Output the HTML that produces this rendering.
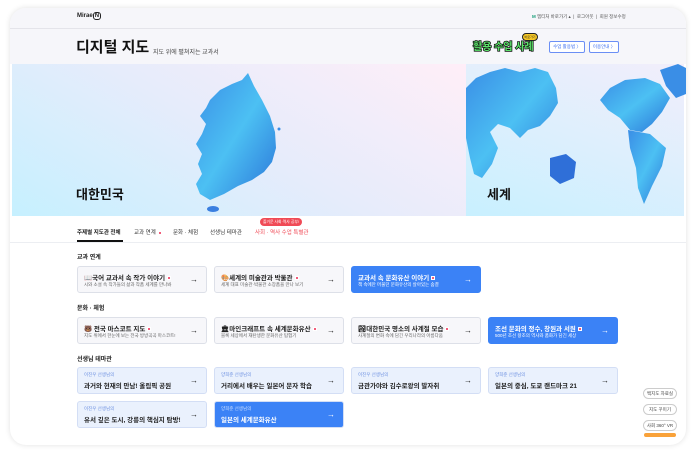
<!DOCTYPE html>
<html><head><meta charset="utf-8"><style>
*{margin:0;padding:0;box-sizing:border-box}
body{width:696px;height:452px;background:#fff;font-family:"Liberation Sans","Noto Sans CJK KR",sans-serif;position:relative;overflow:hidden;color:#222}
.frame{position:absolute;left:10px;top:8px;width:676px;height:437px;border-radius:16px;background:#fff;box-shadow:0 0 6px rgba(0,0,0,.12);overflow:hidden}
.hdr{position:absolute;left:0;top:0;width:676px;height:56px;background:#f6f6fa}
.a{position:absolute;white-space:nowrap}
.card{position:absolute;width:130px;height:27px;border:1px solid #dde0e8;border-radius:3px;background:#f7f7fa}
.card .t{position:absolute;left:6px;top:5px;font-size:6.5px;font-weight:bold;color:#222}
.card .s{position:absolute;left:6px;top:15px;font-size:4.5px;color:#666}
.card .ar{position:absolute;right:8px;top:8px;font-size:8px;font-weight:bold;color:#222}
.card.b{background:#3b82f6;border-color:#3b82f6}
.card.b .t,.card.b .s,.card.b .ar{color:#fff}
.card.l{background:#eaf1fd;border-color:#d3def5}
.card.l .t{top:4px;font-size:4.5px;font-weight:normal;color:#6b8fe0}
.card.l .s{top:12px;font-size:6.5px;font-weight:bold;color:#222}
.card.l.b{background:#3b82f6}.card.l.b .t{color:#cfe0ff}.card.l.b .s{color:#fff}
.n{display:inline-block;width:4px;height:4px;background:#f25c7a;border:0.5px solid #fff;margin-left:2px;vertical-align:middle}
.lab{position:absolute;left:67px;font-size:6px;font-weight:bold}
.fb{position:absolute;left:633px;width:34px;height:11px;border:1px solid #ccc;border-radius:6px;background:#fff;font-size:4.5px;text-align:center;line-height:9px;color:#444}
</style></head><body>
<div class="frame">
<div class="hdr"></div>
<div class="a" style="left:67px;top:5px;font-size:6px;font-weight:bold">Mirae<span style="border:1px solid #222;border-radius:3px;padding:0 1px">N</span></div>
<div class="a" style="left:522px;top:6px;font-size:4.5px;color:#555"><b style="color:#1a9e7a">M</b> 엠티처 바로가기 ▴ &nbsp;|&nbsp; 로그아웃 &nbsp;|&nbsp; 회원 정보수정</div>
<div style="position:absolute;left:0;top:20px;width:676px;height:1px;background:#e4e4ea"></div>
<div class="a" style="left:66px;top:28px;font-size:15px;font-weight:bold;color:#111">디지털 지도</div>
<div class="a" style="left:143px;top:39px;font-size:6px;color:#444">지도 위에 펼쳐지는 교과서</div>
<div class="a" style="left:463px;top:30px;font-size:10px;font-weight:bold;color:#5be36a;-webkit-text-stroke:1.5px #111;paint-order:stroke">활용 수업 사례</div>
<div class="a" style="left:512px;top:25px;width:16px;height:8px;border-radius:4px;background:#f7c825;border:1px solid #222;font-size:3px;text-align:center;line-height:6px">바로가기</div>
<div class="a" style="left:539px;top:33px;width:36px;height:12px;border:1px solid #6b8ff5;border-radius:2px;background:#fff;font-size:4.5px;color:#3b6ef0;text-align:center;line-height:10px">수업 활용법 〉</div>
<div class="a" style="left:579px;top:33px;width:30px;height:12px;border:1px solid #6b8ff5;border-radius:2px;background:#fff;font-size:4.5px;color:#3b6ef0;text-align:center;line-height:10px">이용안내 〉</div>
<div style="position:absolute;left:2px;top:56px;width:454px;height:152px;background:linear-gradient(30deg,#c6f0ff 0%,#e6ecfb 50%,#ffeef8 100%)"></div>
<div style="position:absolute;left:456px;top:56px;width:218px;height:152px;background:linear-gradient(20deg,#c8f0ff,#f2eefb)"></div>
<svg style="position:absolute;left:0;top:0" width="676" height="437">
<defs><linearGradient id="g" x1="0" y1="0" x2="1" y2="1"><stop offset="0" stop-color="#3a8ee6"/><stop offset=".5" stop-color="#4cc0f3"/><stop offset="1" stop-color="#2a74d8"/></linearGradient></defs>
<path d="M238 65 L244 78 L252 92 L260 108 L265 124 L266 140 L262 154 L254 164 L242 172 L228 178 L214 186 L200 192 L190 186 L186 176 L192 166 L188 156 L192 146 L186 136 L192 126 L196 116 L190 108 L196 100 L200 92 L210 82 L222 76 L232 72 Z" fill="url(#g)"/>
<ellipse cx="203" cy="201" rx="6" ry="3" fill="#3a7fe0"/>
<circle cx="269" cy="121" r="1.5" fill="#3a8ee6"/>
<path d="M456 80 L466 70 L480 64 L495 60 L510 64 L525 60 L538 64 L546 80 L548 95 L540 108 L530 118 L518 122 L510 130 L500 120 L488 116 L480 124 L488 140 L482 156 L472 170 L464 166 L460 150 L456 130 Z" fill="url(#g)"/>
<path d="M540 150 L556 146 L566 154 L564 170 L550 176 L540 168 Z" fill="#2f6fd8"/>
<path d="M590 92 L600 80 L615 72 L635 70 L650 76 L660 90 L652 104 L642 116 L632 124 L620 122 L610 110 L598 102 Z" fill="url(#g)"/>
<path d="M618 122 L640 126 L656 140 L652 158 L642 178 L634 196 L628 180 L626 160 L620 140 Z" fill="url(#g)"/>
<path d="M650 62 L668 56 L676 60 L676 86 L666 90 L656 78 Z" fill="#3a8ee6"/>
</svg>
<div class="a" style="left:66px;top:176px;font-size:13px;font-weight:bold;color:#111">대한민국</div>
<div class="a" style="left:477px;top:176px;font-size:13px;font-weight:bold;color:#111">세계</div>
<div class="a" style="left:250px;top:210px;height:8px;padding:0 3px;border-radius:4px;background:#f04a56;font-size:3.8px;color:#fff;line-height:8px">즐거운 사회·역사 공부!</div>
<div class="a" style="left:67px;top:220px;font-size:5.5px;font-weight:bold">주제별 지도관 전체</div>
<div class="a" style="left:124px;top:220px;font-size:5.5px;color:#333">교과 연계<span class="n"></span></div>
<div class="a" style="left:163px;top:220px;font-size:5.5px;color:#333">문화 · 체험</div>
<div class="a" style="left:200px;top:220px;font-size:5.5px;color:#333">선생님 테마관</div>
<div class="a" style="left:245px;top:220px;font-size:5.5px;color:#f04a56">사회 · 역사 수업 특별관</div>
<div style="position:absolute;left:67px;top:232px;width:46px;height:1.5px;background:#111"></div>
<div style="position:absolute;left:0;top:234px;width:676px;height:1px;background:#eceef2"></div>
<div class="lab" style="top:244px">교과 연계</div>
<div class="card" style="left:67px;top:258px"><div class="t">📖국어 교과서 속 작가 이야기<span class="n"></span></div><div class="s">시와 소설 속 작가들의 삶과 작품 세계를 만나봐</div><div class="ar">→</div></div>
<div class="card" style="left:204px;top:258px"><div class="t">🎨세계의 미술관과 박물관<span class="n"></span></div><div class="s">세계 대표 미술관·박물관 소장품을 만나 보기</div><div class="ar">→</div></div>
<div class="card b" style="left:341px;top:258px"><div class="t">교과서 속 문화유산 이야기<span class="n"></span></div><div class="s">책 속에만 머물던 문화유산의 살아있는 숨결</div><div class="ar">→</div></div>
<div class="lab" style="top:295px">문화 · 체험</div>
<div class="card" style="left:67px;top:309px"><div class="t">🐻 전국 마스코트 지도<span class="n"></span></div><div class="s">지도 위에서 한눈에 보는 전국 방방곡곡 마스코트!</div><div class="ar">→</div></div>
<div class="card" style="left:204px;top:309px"><div class="t">🏛마인크래프트 속 세계문화유산<span class="n"></span></div><div class="s">블록 세상에서 재탄생한 문화유산 탐험기</div><div class="ar">→</div></div>
<div class="card" style="left:341px;top:309px"><div class="t">🏞대한민국 명소의 사계절 모습<span class="n"></span></div><div class="s">사계절의 변화 속에 담긴 우리나라의 아름다움</div><div class="ar">→</div></div>
<div class="card b" style="left:478px;top:309px"><div class="t">조선 문화의 정수, 창원과 서원<span class="n"></span></div><div class="s">500년 조선 왕조의 역사와 품화가 담긴 세상</div><div class="ar">→</div></div>
<div class="lab" style="top:346px">선생님 테마관</div>
<div class="card l" style="left:67px;top:359px"><div class="t">이진우 선생님의</div><div class="s">과거와 현재의 만남! 올림픽 공원</div><div class="ar">→</div></div>
<div class="card l" style="left:204px;top:359px"><div class="t">양희준 선생님의</div><div class="s">거리에서 배우는 일본어 문자 학습</div><div class="ar">→</div></div>
<div class="card l" style="left:341px;top:359px"><div class="t">이진우 선생님의</div><div class="s">금관가야와 김수로왕의 발자취</div><div class="ar">→</div></div>
<div class="card l" style="left:478px;top:359px"><div class="t">양희준 선생님의</div><div class="s">일본의 중심, 도쿄 랜드마크 21</div><div class="ar">→</div></div>
<div class="card l" style="left:67px;top:393px"><div class="t">이진우 선생님의</div><div class="s">유서 깊은 도시, 강릉의 핵심지 탐방!</div><div class="ar">→</div></div>
<div class="card l b" style="left:204px;top:393px"><div class="t">양희준 선생님의</div><div class="s">일본의 세계문화유산</div><div class="ar">→</div></div>
<div class="fb" style="top:380px">백지도 자료실</div>
<div class="fb" style="top:396px">지도 꾸미기</div>
<div class="fb" style="top:412px">사회 360° VR</div>
<div style="position:absolute;left:634px;top:425px;width:32px;height:4px;border-radius:2px;background:#f9a23a"></div>
</div>
</body></html>
